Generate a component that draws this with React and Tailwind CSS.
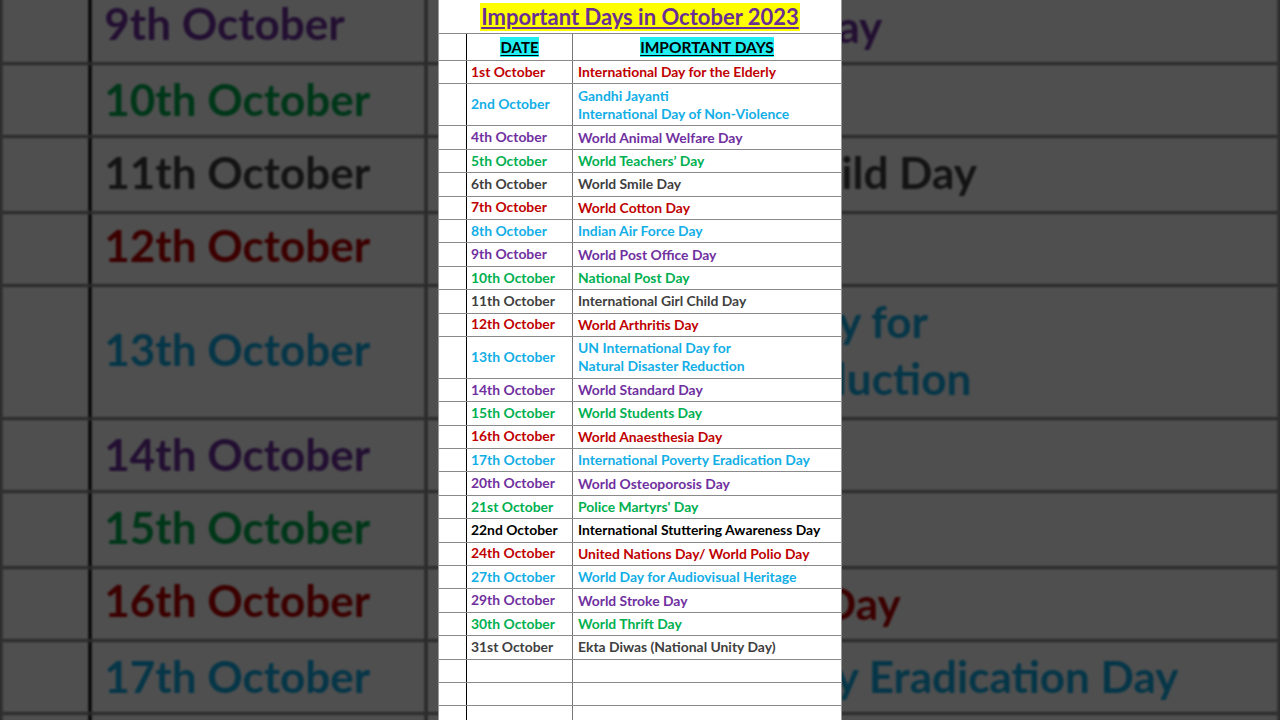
import React from 'react';

// colours used in the sheet
const C = {
  red: 'text-[#c00000]',
  cyan: 'text-[#12aee6]',
  purple: 'text-[#7030a0]',
  green: 'text-[#00b050]',
  gray: 'text-[#404040]',
  black: 'text-black',
};

const rows = [
  { date: '1st October', days: ['International Day for the Elderly'], color: C.red },
  { date: '2nd October', days: ['Gandhi Jayanti', 'International Day of Non-Violence'], color: C.cyan },
  { date: '4th October', days: ['World Animal Welfare Day'], color: C.purple },
  { date: '5th October', days: ['World Teachers’ Day'], color: C.green },
  { date: '6th October', days: ['World Smile Day'], color: C.gray },
  { date: '7th October', days: ['World Cotton Day'], color: C.red },
  { date: '8th October', days: ['Indian Air Force Day'], color: C.cyan },
  { date: '9th October', days: ['World Post Office Day'], color: C.purple },
  { date: '10th October', days: ['National Post Day'], color: C.green },
  { date: '11th October', days: ['International Girl Child Day'], color: C.gray },
  { date: '12th October', days: ['World Arthritis Day'], color: C.red },
  { date: '13th October', days: ['UN International Day for', 'Natural Disaster Reduction'], color: C.cyan },
  { date: '14th October', days: ['World Standard Day'], color: C.purple },
  { date: '15th October', days: ['World Students Day'], color: C.green },
  { date: '16th October', days: ['World Anaesthesia Day'], color: C.red },
  { date: '17th October', days: ['International Poverty Eradication Day'], color: C.cyan },
  { date: '20th October', days: ['World Osteoporosis Day'], color: C.purple },
  { date: '21st October', days: ["Police Martyrs' Day"], color: C.green },
  { date: '22nd October', days: ['International Stuttering Awareness Day'], color: C.black },
  { date: '24th October', days: ['United Nations Day/ World Polio Day'], color: C.red },
  { date: '27th October', days: ['World Day for Audiovisual Heritage'], color: C.cyan },
  { date: '29th October', days: ['World Stroke Day'], color: C.purple },
  { date: '30th October', days: ['World Thrift Day'], color: C.green },
  { date: '31st October', days: ['Ekta Diwas (National Unity Day)'], color: C.gray },
  { date: '', days: [''], color: C.black },
  { date: '', days: [''], color: C.black },
  { date: '', days: [''], color: C.black },
];

// the spreadsheet itself
const Sheet = () => (
  <div className="w-[404px] bg-white border-x border-[#9a9a9a] font-['Lato'] font-bold text-[13.9px]">
    {/* Title */}
    <div className="h-[34px] flex justify-center items-center border-b border-[#8a8a8a]">
      <span className="bg-[#ffff00] px-[1px] text-[22px] leading-[28px] text-[#6a2f95] underline decoration-[#6a2f95] underline-offset-[2px]">
        Important Days in October 2023
      </span>
    </div>

    {/* Header */}
    <div className="grid grid-cols-[28px_106px_1fr] h-[27px] border-b border-[#8a8a8a]">
      <div className="border-r border-black" />
      <div className="border-r border-[#777] flex justify-center items-center">
        <span className="bg-[#22eef2] text-[15px] leading-[20px] text-black underline underline-offset-[2px]">DATE</span>
      </div>
      <div className="flex justify-center items-center">
        <span className="bg-[#22eef2] text-[15.5px] leading-[20px] text-black underline underline-offset-[2px]">IMPORTANT DAYS</span>
      </div>
    </div>

    {/* Rows */}
    {rows.map((r, i) => (
      <div
        key={i}
        className={`grid grid-cols-[28px_106px_1fr] border-b border-[#8a8a8a] ${r.color} ${r.days.length > 1 ? 'h-[42px]' : 'h-[23.4px]'}`}
      >
        <div className="border-r border-black" />
        <div className="border-r border-[#777] flex items-center pl-[4px] whitespace-nowrap">{r.date}</div>
        <div className="flex flex-col justify-center pl-[5px] leading-[18px] whitespace-nowrap">
          {r.days.map((d, j) => (
            <span key={j}>{d}</span>
          ))}
        </div>
      </div>
    ))}
  </div>
);

const App = () => {
  return (
    <div className="relative h-[720px] w-full overflow-hidden bg-[#4e4e4e]">
      {/* Blown-up, dimmed copy of the sheet behind */}
      <div className="absolute inset-0 flex justify-center blur-[1px]">
        <div className="origin-[50%_360px] scale-[3.17]">
          <Sheet />
        </div>
      </div>
      <div className="absolute inset-0 bg-black/[0.69]" />

      {/* Sheet in front */}
      <div className="relative flex justify-center">
        <Sheet />
      </div>
    </div>
  );
};

export default App;
